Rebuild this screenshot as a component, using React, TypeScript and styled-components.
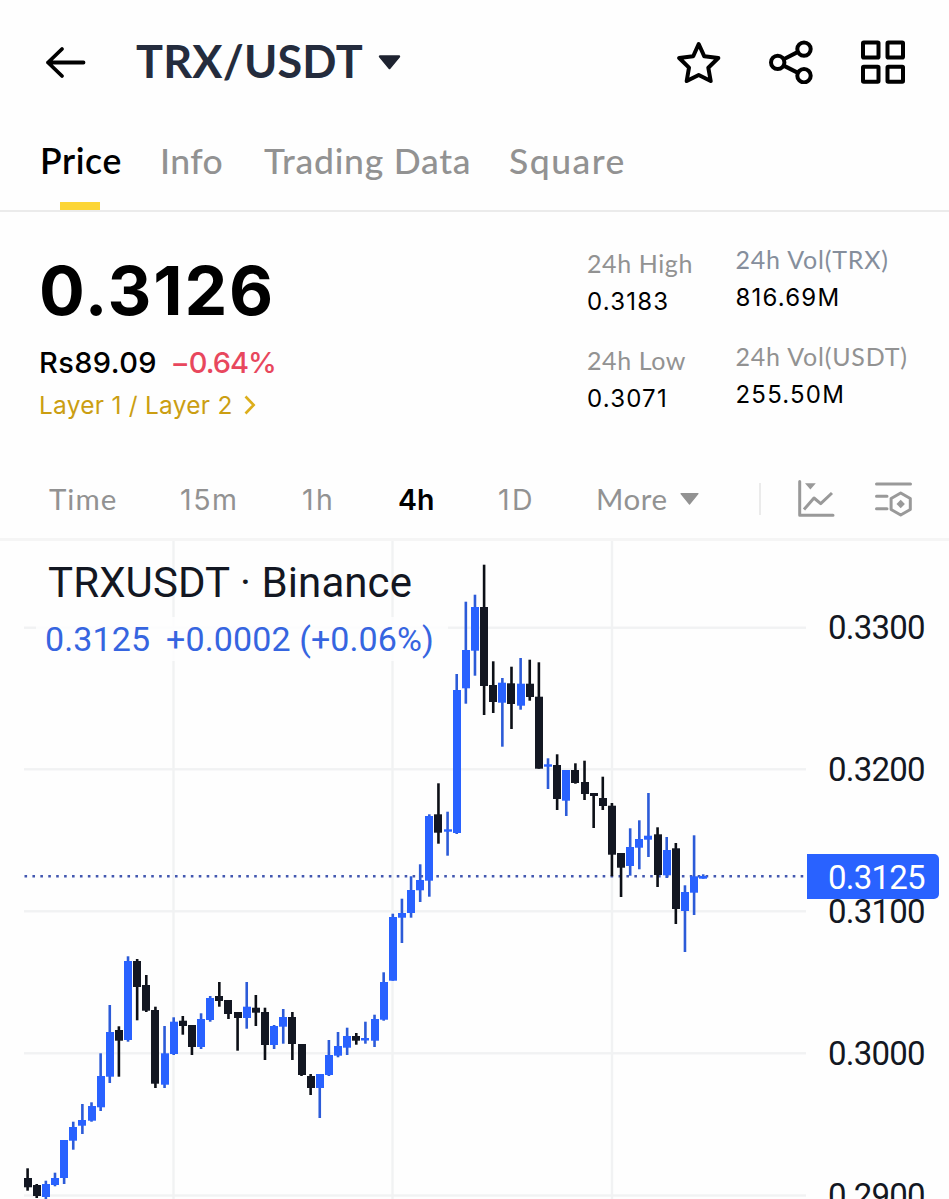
import React from 'react';
import styled, { createGlobalStyle } from 'styled-components';

const GlobalStyle = createGlobalStyle`
  * { box-sizing: border-box; }
  body { margin: 0; background: #fefefe; font-family: Lato, 'Open Sans', sans-serif; overflow: hidden; }
  svg { display: block; flex: none; }
`;

const Screen = styled.main`
  width: 949px;
  height: 1199px;
  overflow: hidden;
  display: flex;
  flex-direction: column;
`;

const TopBar = styled.header`
  height: 124px;
  padding: 0 44px 0 45px;
  display: flex;
  align-items: center;
`;

const PairButton = styled.div`
  display: flex;
  align-items: center;
  gap: 15px;
  margin-left: 50px;
  flex: 1;
`;

const PairName = styled.h1`
  margin: 0;
  width: 227px;
  font-size: 45px;
  line-height: 54px;
  padding-bottom: 3px;
  font-weight: 700;
  letter-spacing: 0.2px;
  color: #242c3d;
  white-space: nowrap;
`;

const Actions = styled.div`
  display: flex;
  align-items: center;
  gap: 48px;
`;

const Tabs = styled.nav`
  height: 88px;
  padding-left: 40px;
  display: flex;
  border-bottom: 2px solid #ebebeb;
`;

const Tab = styled.div<{ $active?: boolean; $width: number; $spacing: number }>`
  width: ${p => p.$width}px;
  display: flex;
  flex-direction: column;
  justify-content: space-between;
  font-size: 35.5px;
  line-height: 42px;
  padding-top: 16px;
  white-space: nowrap;
  font-weight: ${p => (p.$active ? 600 : 500)};
  letter-spacing: ${p => p.$spacing}px;
  color: ${p => (p.$active ? '#000' : '#929292')};
`;

const Indicator = styled.span`
  width: 40px;
  height: 8px;
  margin-left: 20px;
  background: #fcd535;
`;

const Summary = styled.section`
  height: 248px;
  padding-left: 39px;
  display: flex;
`;

const PriceColumn = styled.div`
  width: 548px;
  padding-top: 38px;
`;

const LastPrice = styled.div`
  font: 700 68px/80px Inter, sans-serif;
  letter-spacing: 1.8px;
  color: #000;
`;

const PriceLine = styled.div`
  display: flex;
  gap: 13.5px;
  margin-top: 12px;
  font: 500 29px/42px Inter, sans-serif;
`;

const Fiat = styled.span`
  letter-spacing: 0.4px;
  color: #000;
`;

const Change = styled.span`
  letter-spacing: -1px;
  color: #e8475d;
`;

const TagLink = styled.div`
  display: flex;
  align-items: center;
  gap: 11.5px;
  font: 400 24.5px/42px Inter, sans-serif;
  letter-spacing: 0.25px;
  color: #cb9e12;
`;

const StatColumn = styled.div<{ $width: number; $top: number }>`
  width: ${p => p.$width}px;
  padding-top: ${p => p.$top}px;
  display: flex;
  flex-direction: column;
  gap: 20px;
  white-space: nowrap;
`;

const StatLabel = styled.div<{ $tint?: boolean; $spacing?: number }>`
  font-size: 25px;
  line-height: 36px;
  letter-spacing: ${p => p.$spacing ?? 0.6}px;
  color: ${p => (p.$tint ? '#858e9c' : '#929292')};
`;

const StatValue = styled.div`
  font: 400 24px/40px Inter, sans-serif;
  letter-spacing: 1.2px;
  padding-top: 1px;
  color: #000;
`;

const Intervals = styled.nav`
  height: 81px;
  padding-left: 49px;
  display: flex;
  align-items: center;
  border-bottom: 3px solid #f5f5f5;
`;

const Interval = styled.div<{ $width: number; $active?: boolean; $sans?: boolean; $spacing?: number }>`
  width: ${p => p.$width}px;
  display: flex;
  align-items: center;
  gap: 12px;
  font-family: ${p => (p.$sans ? "Inter" : 'Lato')}, sans-serif;
  font-size: ${p => (p.$sans ? 28.5 : 29.5)}px;
  line-height: 40px;
  padding-top: ${p => (p.$sans ? 1 : 0)}px;
  letter-spacing: ${p => p.$spacing ?? 0}px;
  font-weight: ${p => (p.$active ? 600 : 400)};
  color: ${p => (p.$active ? '#000' : '#929292')};
`;

const Divider = styled.span`
  width: 2px;
  height: 32px;
  background: #ebebeb;
  margin-right: 37px;
`;

const ToolIcons = styled.div`
  display: flex;
  align-items: center;
  gap: 40px;
`;

const ChartPanel = styled.section`
  position: relative;
  display: flex;
  height: 658px;
  font-family: Roboto, sans-serif;
`;

const Axis = styled.div`
  padding: 67px 0 0 22px;
  display: flex;
  flex-direction: column;
  gap: 102px;
`;

const AxisLabel = styled.span`
  font-size: 33px;
  line-height: 40px;
  letter-spacing: -0.8px;
  color: #131722;
`;

const PriceTag = styled.div`
  position: absolute;
  left: 807px;
  top: 313px;
  width: 132px;
  height: 45px;
  padding-left: 21px;
  border-radius: 0 5px 5px 0;
  background: #2962ff;
  color: #fff;
  font-size: 33px;
  line-height: 47px;
  letter-spacing: -0.8px;
`;

const Legend = styled.div`
  position: absolute;
  left: 36px;
  top: 17px;
  color: #131722;
  white-space: nowrap;
`;

const LegendTitle = styled.div`
  padding-left: 12px;
  font-size: 42px;
  line-height: 50px;
  letter-spacing: 0.1px;
`;

const LegendValues = styled.div`
  display: flex;
  gap: 16px;
  padding: 0 14px 0 9px;
  font-size: 34px;
  line-height: 44px;
  margin-top: 9px;
  letter-spacing: 0.1px;
  color: #3665e0;
  background: rgba(254, 254, 254, 0.85);
`;

type Candle = ['u' | 'd', number, number, number, number];

// direction, high, body top, body bottom, low
const candles: Candle[] = [
  ['d', 1168.3, 1178, 1187.3, 1190.7],
  ['d', 1184, 1185, 1196, 1198],
  ['u', 1180.7, 1184, 1197, 1199],
  ['u', 1172.7, 1178, 1185, 1186.3],
  ['u', 1140, 1140, 1178, 1184],
  ['u', 1121.7, 1127, 1140.7, 1149.7],
  ['u', 1104, 1120, 1125.7, 1134],
  ['u', 1102.3, 1106, 1120.7, 1121.7],
  ['u', 1053.3, 1076, 1107.3, 1111],
  ['u', 1005, 1032, 1076.7, 1083],
  ['d', 1026.3, 1030, 1040.7, 1076.7],
  ['u', 956.3, 961, 1040, 1041.7],
  ['d', 959, 961, 987, 1020.3],
  ['d', 975, 985, 1010.7, 1012],
  ['d', 1006.7, 1010, 1083.7, 1088],
  ['u', 1026, 1053.3, 1084.7, 1088],
  ['u', 1017.3, 1021.7, 1054, 1055],
  ['d', 1016, 1020.7, 1026, 1034.7],
  ['d', 1025, 1025, 1047, 1055],
  ['u', 1013.3, 1019, 1047, 1049],
  ['u', 996, 998, 1020, 1021.7],
  ['d', 982, 996, 1001, 1006.7],
  ['d', 1000, 1000, 1014, 1019],
  ['d', 1012, 1012, 1018, 1050.7],
  ['u', 982, 1006.7, 1018, 1028.7],
  ['d', 995, 1007.7, 1012.7, 1026],
  ['d', 1007.7, 1012, 1045, 1060],
  ['u', 1025, 1026, 1045, 1049],
  ['u', 1009, 1017, 1026.7, 1043.7],
  ['d', 1012, 1017, 1044, 1060],
  ['d', 1044, 1044, 1075, 1076],
  ['d', 1074, 1076, 1088, 1095],
  ['u', 1074, 1074, 1088, 1118],
  ['u', 1040, 1055, 1075, 1076],
  ['u', 1032, 1046, 1055.7, 1057.3],
  ['u', 1027.7, 1036, 1047.7, 1055],
  ['d', 1033, 1036, 1040.7, 1044.7],
  ['u', 1021.7, 1038, 1040.5, 1043.7],
  ['u', 1014.7, 1019, 1040.7, 1047],
  ['u', 972.3, 982, 1019.7, 1020.7],
  ['u', 913.7, 917, 980.7, 980.7],
  ['u', 898.7, 913, 917.7, 943],
  ['u', 876.3, 890, 913, 917.7],
  ['u', 864.3, 880, 890.3, 902],
  ['u', 814.3, 816, 880.7, 896.7],
  ['d', 783.3, 814.3, 832.7, 843.7],
  ['u', 811.7, 829.3, 831.7, 855.7],
  ['u', 674, 690, 833, 834],
  ['u', 601.7, 650, 688.3, 703.7],
  ['u', 594.7, 607, 650.7, 675.7],
  ['d', 564.7, 607, 686, 715],
  ['d', 661.3, 685, 702, 713],
  ['u', 678, 682.7, 702.7, 746.7],
  ['d', 666.7, 683.3, 704, 729],
  ['u', 658, 683.7, 705.7, 709.7],
  ['d', 659.7, 683.7, 697, 700.7],
  ['d', 662.3, 696.7, 768.7, 768.7],
  ['u', 758.3, 764.3, 766.7, 789],
  ['d', 754.3, 765, 799, 810],
  ['u', 770, 770, 800.7, 816],
  ['d', 763.3, 770, 783, 783.7],
  ['d', 760.7, 782, 794, 800],
  ['d', 793, 793, 796, 828],
  ['d', 776.7, 798, 806, 810],
  ['d', 803, 805.7, 854.7, 876.3],
  ['d', 853, 853, 867.7, 897],
  ['u', 828.3, 847, 866, 875.7],
  ['u', 820.3, 839, 847.7, 869.3],
  ['u', 793, 835.7, 839.7, 857],
  ['d', 827.3, 834.3, 875, 887],
  ['u', 837, 850, 875.3, 878],
  ['d', 843, 848.3, 909, 924],
  ['u', 885.3, 892, 911, 952],
  ['u', 835.3, 876.3, 892.7, 915],
  ['u', 874.3, 876, 878.7, 878.7],
];

const CandleChart = () => (
  <svg width="806" height="658" viewBox="0 541 806 658">
    {[627.7, 769.3, 911.3, 1053.3, 1195.5].map(y => (
      <rect key={y} x="24" y={y - 1.2} width="782" height="2.4" fill="#f1f2f3" />
    ))}
    {[173.5, 392.5, 612].map(x => (
      <rect key={x} x={x - 1.2} y="541" width="2.4" height="658" fill="#f1f2f3" />
    ))}
    <line x1="24.5" x2="804" y1="876.2" y2="876.2" stroke="#4257b0" strokeWidth="2.6" strokeDasharray="2.6 5.32" />
    {candles.map(([dir, high, top, bottom, low], i) => {
      const c = 27.6 + i * 9.13;
      const up = dir === 'u';
      return (
        <g key={i}>
          <rect x={c - 1.3} y={high} width="2.6" height={low - high} fill={up ? '#2c5bd8' : '#0c0f16'} />
          <rect x={Math.round(c - 4)} y={top} width="8" height={bottom - top} fill={up ? '#2962ff' : '#131722'} />
        </g>
      );
    })}
  </svg>
);

const BackIcon = () => (
  <svg width="41" height="34" viewBox="0 0 41 34" fill="none" stroke="#000" strokeWidth="3.8" strokeLinecap="round" strokeLinejoin="round">
    <path d="M38.5 17.5H3M17 4 3 17.5 17 31" />
  </svg>
);

const StarIcon = () => (
  <svg width="44" height="44" viewBox="0 0 44 44" fill="none" stroke="#000" strokeWidth="4" strokeLinejoin="round">
    <path d="M21.7 4 27.3 16.3 41.3 18 31.3 27.7 33.7 41 21.7 35 9.7 41 12 27.7 2.2 18 16.2 16.3Z" />
  </svg>
);

const ShareIcon = () => (
  <svg width="44" height="44" viewBox="0 0 44 44" fill="none" stroke="#000" strokeWidth="4">
    <circle cx="8.7" cy="22.4" r="6.7" />
    <circle cx="35" cy="9.1" r="6.7" />
    <circle cx="35" cy="35.7" r="6.7" />
    <path d="M14.7 19.2 29 11.9M14.7 25.6 29 32.9" />
  </svg>
);

const GridIcon = () => (
  <svg width="44" height="44" viewBox="0 0 44 44" fill="none" stroke="#000" strokeWidth="4" strokeLinejoin="round">
    <rect x="2" y="2.5" width="15.5" height="15" rx="0.8" />
    <rect x="26.5" y="2.5" width="15.5" height="15" rx="0.8" />
    <rect x="2" y="26.8" width="15.5" height="15" rx="0.8" />
    <rect x="26.5" y="26.8" width="15.5" height="15" rx="0.8" />
  </svg>
);

const PairCaret = () => (
  <svg width="23" height="16" viewBox="0 0 23 16">
    <path d="M2 2.5H21L11.5 14Z" fill="#1e2330" stroke="#1e2330" strokeWidth="2.4" strokeLinejoin="round" />
  </svg>
);

const MoreCaret = () => (
  <svg width="19" height="13" viewBox="0 0 19 13">
    <path d="M1 0.6H18L9.5 11Z" fill="#929292" stroke="#929292" strokeWidth="1.2" strokeLinejoin="round" />
  </svg>
);

const Chevron = () => (
  <svg width="12" height="20" viewBox="0 0 12 20" fill="none" stroke="#dcae1c" strokeWidth="2.6">
    <path d="M1.5 1.5 9.7 10 1.5 18.5" />
  </svg>
);

const IndicatorIcon = () => (
  <svg width="37" height="38" viewBox="0 0 37 38" fill="none" stroke="#999" strokeWidth="3" strokeLinecap="round" strokeLinejoin="round">
    <path d="M1.7 1.5V35.3H35" />
    <path d="M6 29.5 16 18 22.7 23.7 34 13" strokeLinecap="butt" />
    <path d="M7 3.2H17.8L12.4 9.5Z" fill="#999" stroke="none" />
  </svg>
);

const SettingsIcon = () => (
  <svg width="37" height="38" viewBox="0 0 37 38" fill="none" stroke="#999" strokeWidth="3" strokeLinejoin="round">
    <path d="M1.5 4H35.5M1.5 16.3H12M1.5 28.7H12" strokeLinecap="round" />
    <path d="M25.7 13 35.3 18.5V29.5L25.7 35 16.1 29.5V18.5Z" />
    <path d="M25.7 19.8 29.9 24 25.7 28.2 21.5 24Z" fill="#999" stroke="none" />
  </svg>
);

export default function App() {
  return (
    <Screen>
      <GlobalStyle />
      <TopBar>
        <BackIcon />
        <PairButton>
          <PairName>TRX/USDT</PairName>
          <PairCaret />
        </PairButton>
        <Actions>
          <StarIcon />
          <ShareIcon />
          <GridIcon />
        </Actions>
      </TopBar>

      <Tabs>
        <Tab $active $width={120} $spacing={0.6}>
          Price
          <Indicator />
        </Tab>
        <Tab $width={104} $spacing={0.4}>Info</Tab>
        <Tab $width={245} $spacing={0.75}>Trading Data</Tab>
        <Tab $width={130} $spacing={1.5}>Square</Tab>
      </Tabs>

      <Summary>
        <PriceColumn>
          <LastPrice>0.3126</LastPrice>
          <PriceLine>
            <Fiat>Rs89.09</Fiat>
            <Change>−0.64%</Change>
          </PriceLine>
          <TagLink>
            Layer 1 / Layer 2
            <Chevron />
          </TagLink>
        </PriceColumn>
        <StatColumn $width={148.5} $top={33}>
          <div>
            <StatLabel>24h High</StatLabel>
            <StatValue>0.3183</StatValue>
          </div>
          <div>
            <StatLabel>24h Low</StatLabel>
            <StatValue>0.3071</StatValue>
          </div>
        </StatColumn>
        <StatColumn $width={180} $top={29}>
          <div>
            <StatLabel $tint $spacing={0.8}>24h Vol(TRX)</StatLabel>
            <StatValue>816.69M</StatValue>
          </div>
          <div>
            <StatLabel $spacing={0.8}>24h Vol(USDT)</StatLabel>
            <StatValue>255.50M</StatValue>
          </div>
        </StatColumn>
      </Summary>

      <Intervals>
        <Interval $width={131} $spacing={1}>Time</Interval>
        <Interval $width={122} $sans $spacing={1.6}>15m</Interval>
        <Interval $width={96} $sans $spacing={2.5}>1h</Interval>
        <Interval $width={100} $active $sans>4h</Interval>
        <Interval $width={98} $sans $spacing={2.5}>1D</Interval>
        <Interval $width={163} $spacing={0.6}>
          More
          <MoreCaret />
        </Interval>
        <Divider />
        <ToolIcons>
          <IndicatorIcon />
          <SettingsIcon />
        </ToolIcons>
      </Intervals>

      <ChartPanel>
        <CandleChart />
        <Axis>
          {['0.3300', '0.3200', '0.3100', '0.3000', '0.2900'].map(v => (
            <AxisLabel key={v}>{v}</AxisLabel>
          ))}
        </Axis>
        <PriceTag>0.3125</PriceTag>
        <Legend>
          <LegendTitle>TRXUSDT · Binance</LegendTitle>
          <LegendValues>
            <span>0.3125</span>
            <span>+0.0002 (+0.06%)</span>
          </LegendValues>
        </Legend>
      </ChartPanel>
    </Screen>
  );
}
